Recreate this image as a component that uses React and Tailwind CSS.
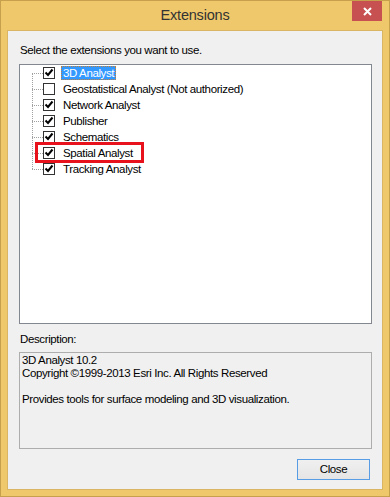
import React from 'react';

const items = [
  { label: '3D Analyst', checked: true, selected: true },
  { label: 'Geostatistical Analyst (Not authorized)', checked: false },
  { label: 'Network Analyst', checked: true },
  { label: 'Publisher', checked: true },
  { label: 'Schematics', checked: true },
  { label: 'Spatial Analyst', checked: true },
  { label: 'Tracking Analyst', checked: true },
];

const font = { fontFamily: '"Liberation Sans", Arial, sans-serif' };

const CheckBox = ({ checked }) => (
  <div className="w-[12px] h-[12px] border border-[#333333] bg-white flex items-center justify-center">
    {checked && (
      <svg width="10" height="10" viewBox="0 0 10 10">
        <path d="M1.5 4.5 L4 7 L8.5 1.5" fill="none" stroke="#000" strokeWidth="2" />
      </svg>
    )}
  </div>
);

const Row = ({ item }) => (
  <div className="flex items-center h-[16px]">
    {/* tree connector */}
    <div className="w-[23px] h-full flex items-center">
      <div className="ml-[12px] w-[11px] border-t border-dotted border-[#a0a0a0]" />
    </div>
    <CheckBox checked={item.checked} />
    <div className="w-[6px]" />
    <span
      className={
        item.selected
          ? 'h-[14px] leading-[12px] px-[1px] bg-[#3399ff] text-white border border-dotted border-[#c0803a]'
          : 'h-[14px] leading-[14px] px-[2px] text-black'
      }
    >
      {item.label}
    </span>
  </div>
);

export default function App() {
  return (
    <div
      className="w-[390px] h-[497px] border border-[#c7a04e] bg-[#efc86b] flex flex-col text-[11.5px] tracking-[-0.38px] text-black"
      style={font}
    >
      {/* title bar */}
      <div className="relative h-[29px] flex items-center justify-center">
        <span className="text-[14.5px] tracking-[-0.2px] text-[#333333]">Extensions</span>
        <div className="absolute top-0 right-[7px] w-[30px] h-[20px] bg-[#c75050] flex items-center justify-center">
          <svg width="9" height="9" viewBox="0 0 9 9">
            <path d="M1 1 L8 8 M8 1 L1 8" stroke="#ffffff" strokeWidth="2" />
          </svg>
        </div>
      </div>

      {/* client area */}
      <div className="mx-[6px] mb-[6px] flex-1 border border-[#d9b564] bg-[#f0f0f0] flex flex-col">
        <div className="mt-[12px] pl-[12px] leading-[15px]">Select the extensions you want to use.</div>

        <div className="relative mt-[6px] ml-[11px] w-[353px] h-[260px] border border-[#828790] bg-white">
          <div className="absolute left-[12px] top-[8px] h-[96px] border-l border-dotted border-[#a0a0a0]" />
          {items.map((item) => (
            <Row key={item.label} item={item} />
          ))}
          <div className="absolute left-[15px] top-[77px] w-[109px] h-[21px] border-[3px] border-[#e8121c]" />
        </div>

        <div className="mt-[8px] pl-[12px] leading-[15px]">Description:</div>

        <div className="mt-[5px] ml-[11px] w-[353px] h-[97px] border border-[#adadad] bg-[#f0f0f0] pl-[2px] pt-[1px] leading-[13px]">
          <div>3D Analyst 10.2</div>
          <div>Copyright ©1999-2013 Esri Inc. All Rights Reserved</div>
          <div className="h-[13px]" />
          <div>Provides tools for surface modeling and 3D visualization.</div>
        </div>

        <button className="mt-[10px] ml-auto mr-[12px] w-[73px] h-[21px] border border-[#569de5] bg-gradient-to-b from-[#f0f0f0] to-[#e5e5e5] text-black">
          Close
        </button>
      </div>
    </div>
  );
}
